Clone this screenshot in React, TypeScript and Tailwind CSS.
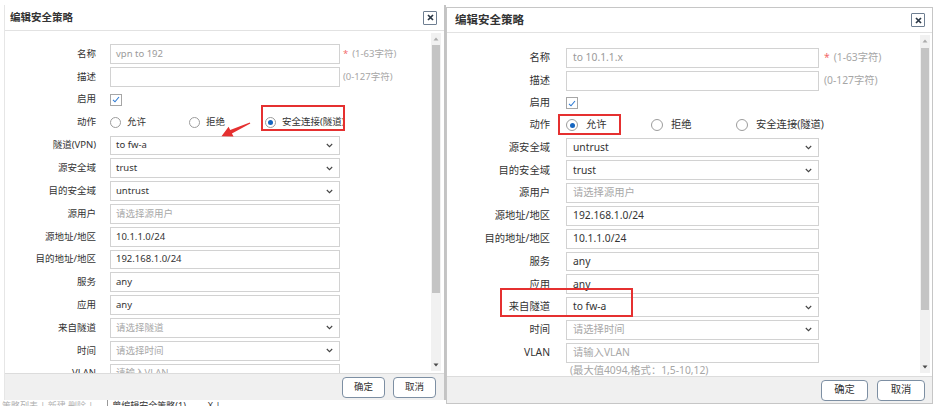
type Field =
  | { type: "text"; label: string; value?: string; placeholder?: string; muted?: boolean; hint?: "name" | "desc"; note?: string }
  | { type: "select"; label: string; value?: string; placeholder?: string }
  | { type: "check"; label: string }
  | { type: "radio"; label: string; picked: number };

const leftRows: Field[] = [
  { type: "text", label: "名称", value: "vpn to 192", muted: true, hint: "name" },
  { type: "text", label: "描述", hint: "desc" },
  { type: "check", label: "启用" },
  { type: "radio", label: "动作", picked: 2 },
  { type: "select", label: "隧道(VPN)", value: "to fw-a" },
  { type: "select", label: "源安全域", value: "trust" },
  { type: "select", label: "目的安全域", value: "untrust" },
  { type: "text", label: "源用户", placeholder: "请选择源用户" },
  { type: "text", label: "源地址/地区", value: "10.1.1.0/24" },
  { type: "text", label: "目的地址/地区", value: "192.168.1.0/24" },
  { type: "text", label: "服务", value: "any" },
  { type: "text", label: "应用", value: "any" },
  { type: "select", label: "来自隧道", placeholder: "请选择隧道" },
  { type: "select", label: "时间", placeholder: "请选择时间" },
  { type: "text", label: "VLAN", placeholder: "请输入VLAN" },
];

const rightRows: Field[] = [
  { type: "text", label: "名称", value: "to 10.1.1.x", muted: true, hint: "name" },
  { type: "text", label: "描述", hint: "desc" },
  { type: "check", label: "启用" },
  { type: "radio", label: "动作", picked: 0 },
  { type: "select", label: "源安全域", value: "untrust" },
  { type: "select", label: "目的安全域", value: "trust" },
  { type: "text", label: "源用户", placeholder: "请选择源用户" },
  { type: "text", label: "源地址/地区", value: "192.168.1.0/24" },
  { type: "text", label: "目的地址/地区", value: "10.1.1.0/24" },
  { type: "text", label: "服务", value: "any" },
  { type: "text", label: "应用", value: "any" },
  { type: "select", label: "来自隧道", value: "to fw-a" },
  { type: "select", label: "时间", placeholder: "请选择时间" },
  { type: "text", label: "VLAN", placeholder: "请输入VLAN", note: "(最大值4094,格式：1,5-10,12)" },
];

const options = ["允许", "拒绝", "安全连接(隧道)"];

function Chevron() {
  return (
    <svg width="7" height="5" viewBox="0 0 7 5" className="shrink-0">
      <polyline points="0.8,1 3.5,3.7 6.2,1" fill="none" stroke="#444" strokeWidth="1.1" />
    </svg>
  );
}

function CloseBtn() {
  return (
    <div className="w-[14px] h-[14px] border border-[#6e7e91] rounded-[1px] bg-white flex items-center justify-center">
      <svg width="7" height="7" viewBox="0 0 7 7">
        <path d="M1 1L6 6M6 1L1 6" stroke="#2b3846" strokeWidth="1.7" />
      </svg>
    </div>
  );
}

function ScrollBar({ wide }: { wide: boolean }) {
  return (
    <div className={`w-[10px] flex flex-col bg-[#f1f1f1] ${wide ? "mt-[2px] mb-[3px] mr-[2px]" : "mt-[2px] mb-[2px] mr-[3px]"}`}>
      <div className="h-[12px] flex items-center justify-center">
        <svg width="6" height="4" viewBox="0 0 6 4"><polygon points="3,0.5 5.5,3.5 0.5,3.5" fill="#ababab" /></svg>
      </div>
      <div className={`mx-[1px] bg-[#c4c4c4] ${wide ? "mt-[1px] h-[262px]" : "h-[248px]"}`} />
      <div className="flex-1" />
      <div className="h-[12px] flex items-center justify-center">
        <svg width="6" height="4" viewBox="0 0 6 4"><polygon points="0.5,0.5 5.5,0.5 3,3.5" fill="#4a4a4a" /></svg>
      </div>
    </div>
  );
}

function Row({ f, wide }: { f: Field; wide: boolean }) {
  const rowH = f.type === "check" || f.type === "radio" ? (wide ? "h-[19px]" : "h-[20px]") : "h-[19.8px]";
  const box = `${wide ? "w-[253px]" : "w-[230px]"} h-full shrink-0 border border-[#d2d2d2] bg-white flex items-center ${wide ? "pl-[6px] pr-[6px]" : "pl-[5px] pr-[6px]"}`;

  let control;
  if (f.type === "check") {
    control = (
      <div className="w-[12px] h-[12px] border border-[#a6a6a6] bg-white flex items-center justify-center">
        <svg width="8" height="7" viewBox="0 0 8 7">
          <polyline points="1,3.8 3,5.8 7,1" fill="none" stroke="#2e7bd4" strokeWidth="1.1" />
        </svg>
      </div>
    );
  } else if (f.type === "radio") {
    const widths = wide ? ["w-[85px]", "w-[85px]", ""] : ["w-[79px]", "w-[76px]", ""];
    control = (
      <div className="flex items-center">
        {options.map((o, i) => (
          <div key={o} className={`flex items-center ${widths[i]} ${wide ? "gap-[8px]" : "gap-[6px]"}`}>
            <span className={`${wide ? "w-[12px] h-[12px]" : "w-[11px] h-[11px]"} rounded-full border border-[#9c9c9c] bg-white flex items-center justify-center`}>
              {f.picked === i && <span className="w-[5px] h-[5px] rounded-full bg-[#1565c0]" />}
            </span>
            <span className="text-[#333]">{o}</span>
          </div>
        ))}
      </div>
    );
  } else if (f.type === "select") {
    control = (
      <div className={`${box} justify-between`}>
        <span className={f.value ? "text-[#333]" : "text-[#a8a8a8]"}>{f.value ?? f.placeholder}</span>
        <Chevron />
      </div>
    );
  } else {
    control = (
      <div className={box}>
        <span className={f.value ? (f.muted ? "text-[#9a9a9a]" : "text-[#333]") : "text-[#a8a8a8]"}>{f.value ?? f.placeholder}</span>
      </div>
    );
  }

  return (
    <>
      <div className={`flex items-center shrink-0 ${rowH} ${wide ? "gap-[16px]" : "gap-[14px]"}`}>
        <div className={`${wide ? "w-[103px]" : "w-[91px]"} shrink-0 text-right text-[#333] whitespace-nowrap`}>{f.label}</div>
        {control}
        {f.type === "text" && f.hint === "name" && (
          <span className="ml-[-11px] whitespace-nowrap">
            <span className="text-[#f26b6b]">*</span>
            <span className="ml-[4px] text-[#a6a6a6]">(1-63字符)</span>
          </span>
        )}
        {f.type === "text" && f.hint === "desc" && (
          <span className="ml-[-11px] whitespace-nowrap text-[#a6a6a6]">(0-127字符)</span>
        )}
      </div>
      {f.type === "text" && f.note && (
        <div className="-mt-[2px] pl-[123px] h-[12px] leading-[12px] text-[#a6a6a6] shrink-0">{f.note}</div>
      )}
    </>
  );
}

function Dialog({ wide, rows }: { wide: boolean; rows: Field[] }) {
  return (
    <div
      className={
        wide
          ? "mt-[7px] w-[487px] h-[397px] border border-[#c6c6c6] bg-white flex flex-col shrink-0"
          : "mt-[5px] ml-[4px] w-[442px] h-[395px] border-l border-r-2 border-l-[#e6e6e6] border-r-[#c4c4c4] bg-white flex flex-col shrink-0"
      }
    >
      <div className={`flex items-center justify-between border-b border-[#e2e2e2] shrink-0 ${wide ? "h-[25px] pl-[8px] pr-[7px]" : "h-[26px] pl-[5px] pr-[7px]"}`}>
        <span className={`font-bold text-[#333] ${wide ? "text-[11.5px]" : "text-[10.5px]"}`}>编辑安全策略</span>
        <CloseBtn />
      </div>
      <div className="flex-1 flex min-h-0">
        <div className={`flex-1 min-w-0 overflow-hidden flex flex-col gap-[3px] ${wide ? "pt-[15px] text-[10.3px]" : "pt-[13px] text-[9.5px]"}`}>
          {rows.map((f) => (
            <Row key={f.label} f={f} wide={wide} />
          ))}
        </div>
        <ScrollBar wide={wide} />
      </div>
      <div className={`h-[27px] shrink-0 flex items-center justify-end border-t border-[#dcdcdc] bg-[#f0f0f0] ${wide ? "pr-[7px] gap-[9px] text-[10.3px]" : "pr-[8px] gap-[8px] text-[9.5px]"}`}>
        <div className={`${wide ? "w-[47px]" : "w-[43px]"} h-[21px] rounded-[4px] border border-[#7d8fa3] bg-white flex items-center justify-center text-[#333]`}>确定</div>
        <div className={`${wide ? "w-[48px]" : "w-[43px]"} h-[21px] rounded-[4px] border border-[#7d8fa3] bg-white flex items-center justify-center text-[#333]`}>取消</div>
      </div>
    </div>
  );
}

export default function App() {
  return (
    <div className="relative w-[937px] h-[406px] bg-white overflow-hidden font-['Noto_Sans','Noto_Sans_CJK_SC',sans-serif]">
      <div className="flex items-start">
        <div className="flex flex-col w-[446px] shrink-0">
          <Dialog wide={false} rows={leftRows} />
          <div className="h-[6px] overflow-hidden flex items-start text-[9px] leading-[11px] whitespace-nowrap">
            <span className="pl-[2px] text-[#b0b0b0]">策略列表 | 新建 删除 |</span>
            <span className="ml-[14px] pl-[4px] border-l border-[#999] text-[#333]">曾编辑安全策略(1)</span>
            <span className="ml-[22px] text-[#333]">X |</span>
          </div>
        </div>
        <Dialog wide rows={rightRows} />
      </div>

      {/* annotations */}
      <div className="absolute left-[261px] top-[105px] w-[84px] h-[26px] border-2 border-[#e53030]" />
      <div className="absolute left-[558px] top-[114px] w-[63px] h-[21px] border-2 border-[#e53030]" />
      <div className="absolute left-[500px] top-[288px] w-[133px] h-[29px] border-2 border-[#e53030]" />
      <svg className="absolute left-0 top-0 pointer-events-none" width="937" height="406" viewBox="0 0 937 406">
        <polygon
          points="249.8,122.4 230.2,130 228.6,126.8 221.5,136.3 233.6,136.6 231.9,133.6 250.3,123.6"
          fill="#e53030"
        />
      </svg>
    </div>
  );
}
